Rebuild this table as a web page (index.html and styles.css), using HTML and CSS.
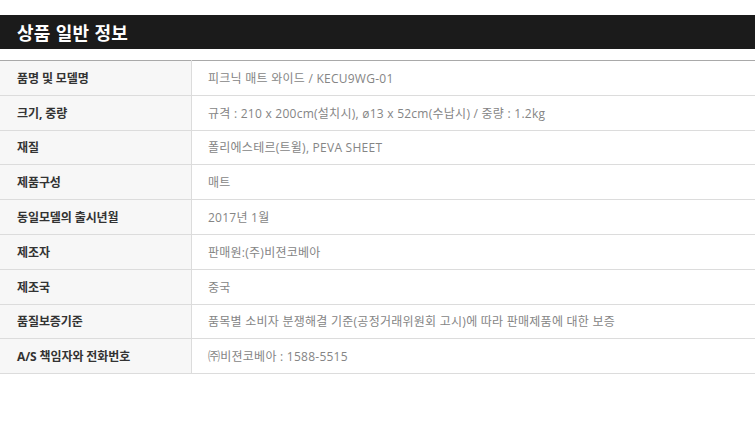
FILE: index.html
```html
<!DOCTYPE html>
<html lang="ko">
<head>
<meta charset="utf-8">
<link rel="stylesheet" href="styles.css">
</head>
<body>
<div class="page">
  <h2 class="title">상품 일반 정보</h2>
  <table class="info">
    <tr><th>품명 및 모델명</th><td>피크닉 매트 와이드 / KECU9WG-01</td></tr>
    <tr><th>크기, 중량</th><td>규격 : 210 x 200cm(설치시), ø13 x 52cm(수납시) / 중량 : 1.2kg</td></tr>
    <tr><th>재질</th><td>폴리에스테르(트윌), PEVA SHEET</td></tr>
    <tr><th>제품구성</th><td>매트</td></tr>
    <tr><th>동일모델의 출시년월</th><td>2017년 1월</td></tr>
    <tr><th>제조자</th><td>판매원:(주)비젼코베아</td></tr>
    <tr><th>제조국</th><td>중국</td></tr>
    <tr><th>품질보증기준</th><td>품목별 소비자 분쟁해결 기준(공정거래위원회 고시)에 따라 판매제품에 대한 보증</td></tr>
    <tr><th>A/S 책임자와 전화번호</th><td>㈜비젼코베아 : 1588-5515</td></tr>
  </table>
</div>
</body>
</html>
```
FILE: styles.css
```css
html, body {
  margin: 0;
  padding: 0;
  background: #fff;
}
.page {
  padding-top: 15px;
  font-family: "Open Sans", "Noto Sans CJK KR", sans-serif;
}
.title {
  margin: 0;
  height: 34px;
  line-height: 34px;
  background: #1b1b1b;
  color: #fff;
  font-family: "Noto Sans CJK KR", sans-serif;
  font-size: 18px;
  font-weight: 700;
  padding-left: 17px;
  letter-spacing: 0.2px;
}
.info {
  margin-top: 11px;
  width: 100%;
  border-collapse: collapse;
  border-top: 1px solid #a9a9a9;
  font-size: 12px;
}
.info th, .info td {
  height: 33.8px;
  padding: 0;
  border-bottom: 1px solid #dcdcdc;
  text-align: left;
  vertical-align: middle;
}
.info th {
  width: 174px;
  padding-left: 17px;
  background: #f7f7f7;
  color: #333;
  font-weight: 700;
  border-right: 1px solid #dcdcdc;
  letter-spacing: -0.1px;
}
.info td {
  padding-left: 16px;
  color: #858585;
  font-weight: 400;
  letter-spacing: 0.25px;
}
```
